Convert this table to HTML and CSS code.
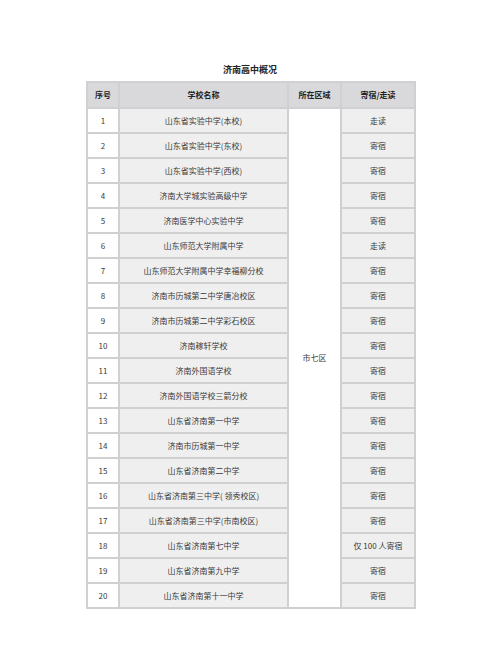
FILE: index.html
```html
<!DOCTYPE html>
<html lang="zh-CN">
<head>
<meta charset="utf-8">
<link rel="stylesheet" href="styles.css">
</head>
<body>
<div class="page">
  <h1 class="title">济南高中概况</h1>
  <table class="schools">
    <colgroup>
      <col class="c1"><col class="c2"><col class="c3"><col class="c4">
    </colgroup>
    <thead>
      <tr><th>序号</th><th>学校名称</th><th>所在区域</th><th>寄宿/走读</th></tr>
    </thead>
    <tbody>
      <tr><td class="num">1</td><td class="name">山东省实验中学(本校)</td><td class="area" rowspan="20">市七区</td><td class="mode">走读</td></tr>
      <tr><td class="num">2</td><td class="name">山东省实验中学(东校)</td><td class="mode">寄宿</td></tr>
      <tr><td class="num">3</td><td class="name">山东省实验中学(西校)</td><td class="mode">寄宿</td></tr>
      <tr><td class="num">4</td><td class="name">济南大学城实验高级中学</td><td class="mode">寄宿</td></tr>
      <tr><td class="num">5</td><td class="name">济南医学中心实验中学</td><td class="mode">寄宿</td></tr>
      <tr><td class="num">6</td><td class="name">山东师范大学附属中学</td><td class="mode">走读</td></tr>
      <tr><td class="num">7</td><td class="name">山东师范大学附属中学幸福柳分校</td><td class="mode">寄宿</td></tr>
      <tr><td class="num">8</td><td class="name">济南市历城第二中学唐冶校区</td><td class="mode">寄宿</td></tr>
      <tr><td class="num">9</td><td class="name">济南市历城第二中学彩石校区</td><td class="mode">寄宿</td></tr>
      <tr><td class="num">10</td><td class="name">济南稼轩学校</td><td class="mode">寄宿</td></tr>
      <tr><td class="num">11</td><td class="name">济南外国语学校</td><td class="mode">寄宿</td></tr>
      <tr><td class="num">12</td><td class="name">济南外国语学校三箭分校</td><td class="mode">寄宿</td></tr>
      <tr><td class="num">13</td><td class="name">山东省济南第一中学</td><td class="mode">寄宿</td></tr>
      <tr><td class="num">14</td><td class="name">济南市历城第一中学</td><td class="mode">寄宿</td></tr>
      <tr><td class="num">15</td><td class="name">山东省济南第二中学</td><td class="mode">寄宿</td></tr>
      <tr><td class="num">16</td><td class="name">山东省济南第三中学( 领秀校区)</td><td class="mode">寄宿</td></tr>
      <tr><td class="num">17</td><td class="name">山东省济南第三中学(市南校区)</td><td class="mode">寄宿</td></tr>
      <tr><td class="num">18</td><td class="name">山东省济南第七中学</td><td class="mode">仅 100 人寄宿</td></tr>
      <tr><td class="num">19</td><td class="name">山东省济南第九中学</td><td class="mode">寄宿</td></tr>
      <tr><td class="num">20</td><td class="name">山东省济南第十一中学</td><td class="mode">寄宿</td></tr>
    </tbody>
  </table>
</div>
</body>
</html>
```
FILE: styles.css
```css
html, body {
  margin: 0;
  padding: 0;
  background: #ffffff;
}
body {
  font-family: "Noto Sans CJK SC", "Noto Sans", sans-serif;
  color: #333333;
}
.page {
  width: 328px;
  margin: 0 auto;
  padding-top: 64px;
}
.title {
  margin: 0 0 5px 0;
  font-size: 9px;
  line-height: 12px;
  font-weight: bold;
  text-align: center;
  color: #222222;
}
.schools {
  width: 328px;
  border-collapse: collapse;
  table-layout: fixed;
  font-size: 8px;
}
.c1 { width: 32px; }
.c2 { width: 169px; }
.c3 { width: 53px; }
.c4 { width: 74px; }
.schools th,
.schools td {
  border: 2px solid #d0d0d2;
  text-align: center;
  vertical-align: middle;
  padding: 0;
  line-height: 10px;
}
.schools th {
  height: 24px;
  background: #d9d9dc;
  font-weight: bold;
  color: #222222;
}
.schools td {
  height: 23px;
  color: #3a3a3a;
}
.schools td.num {
  background: #ffffff;
}
.schools td.name {
  background: #efefef;
}
.schools td.area {
  background: #ffffff;
}
.schools td.mode {
  background: #efefef;
}
```
